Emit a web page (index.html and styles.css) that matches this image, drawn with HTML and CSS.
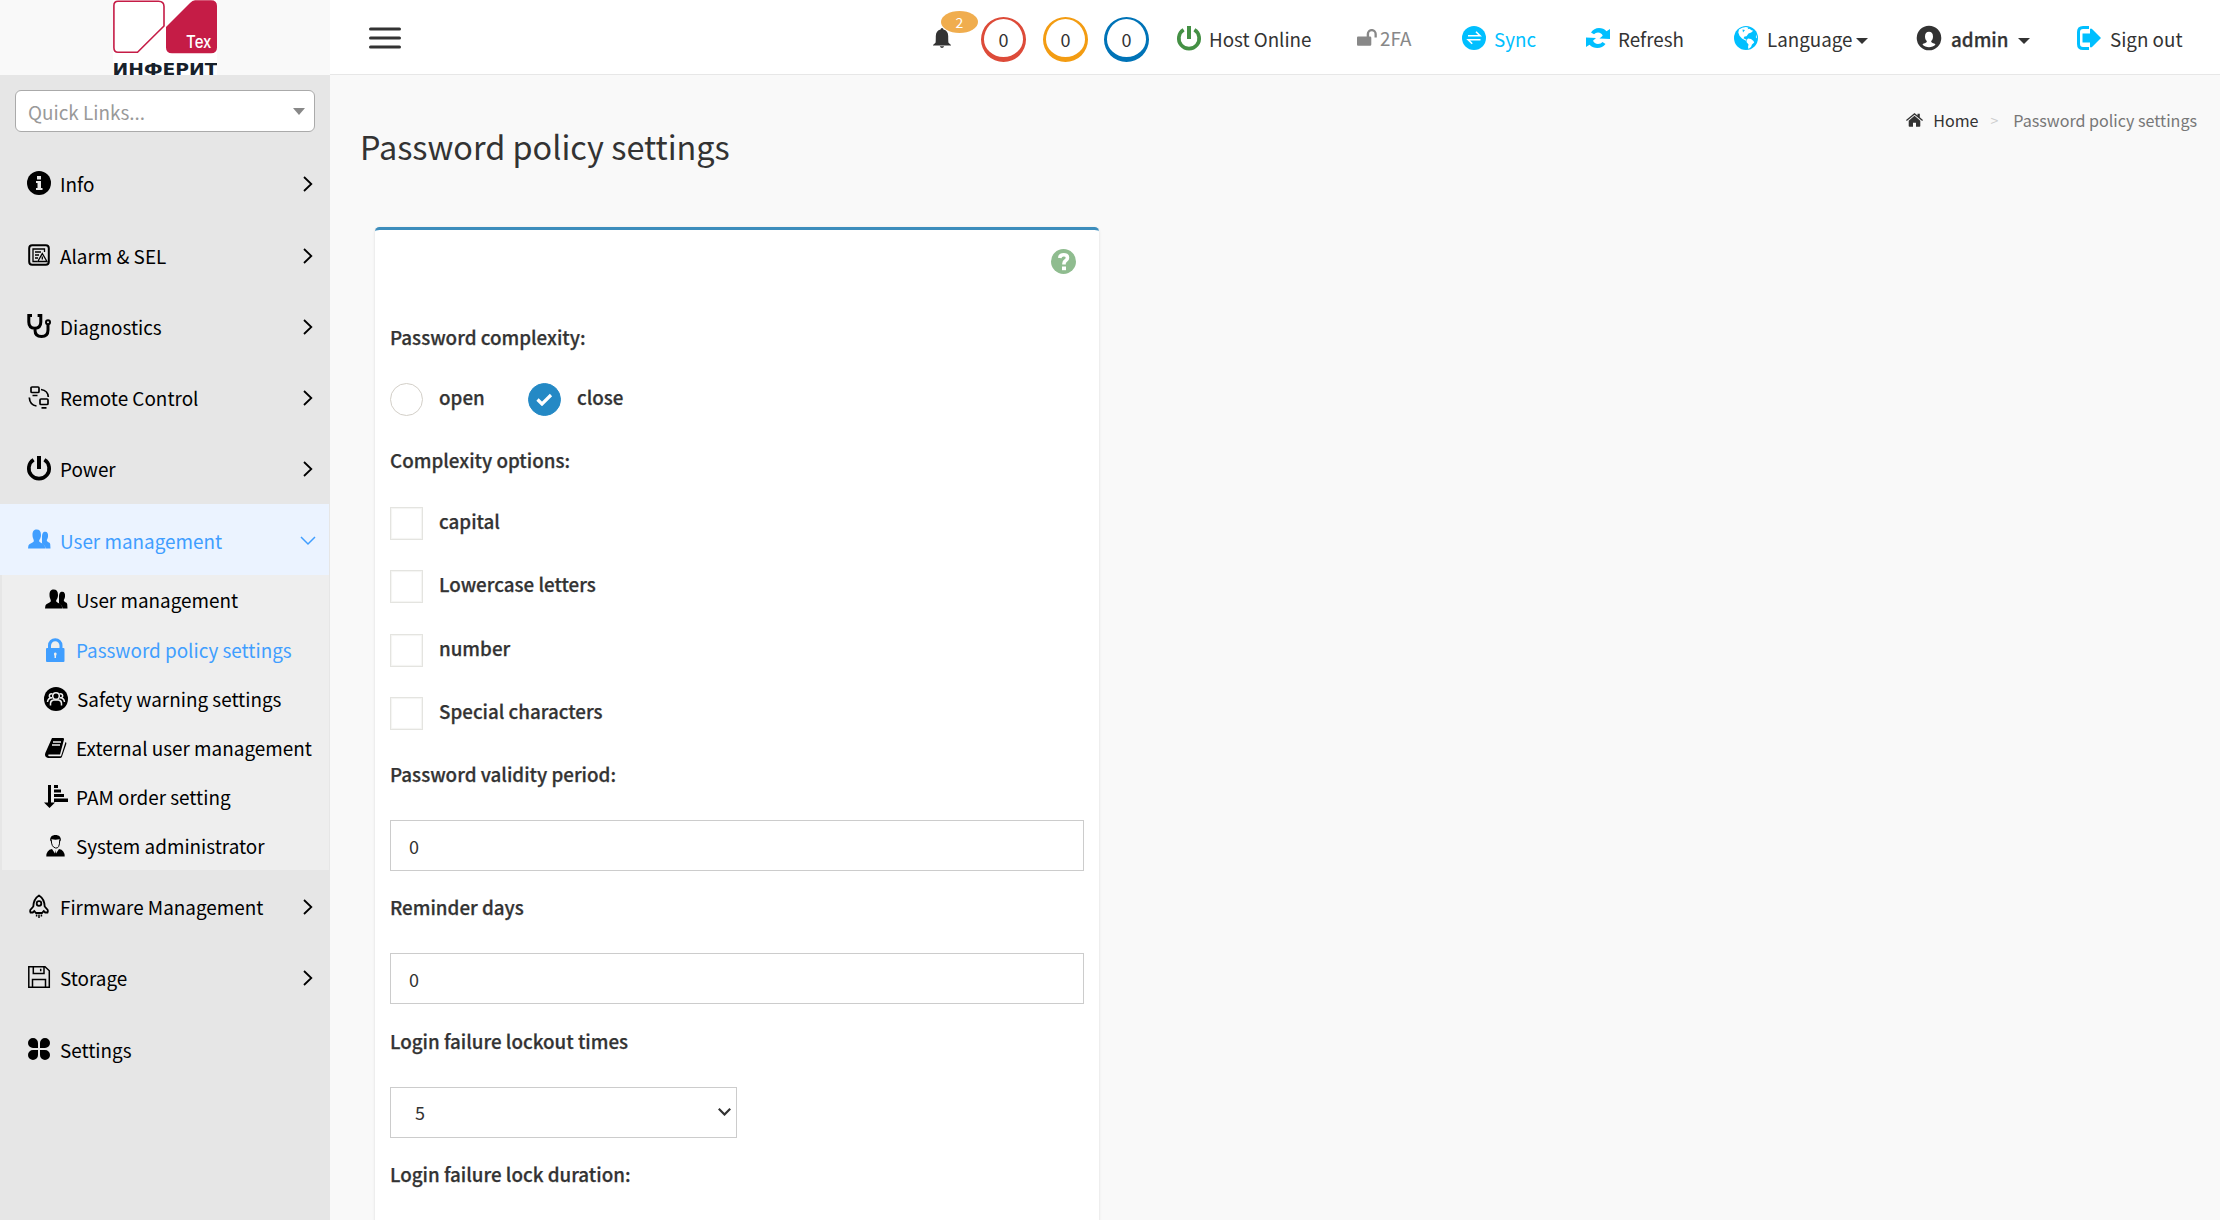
FILE: index.html
```html
<!DOCTYPE html>
<html lang="en">
<head>
<meta charset="utf-8">
<title>Password policy settings</title>
<link rel="stylesheet" href="styles.css">
</head>
<body>
<div class="app">
  <aside class="sidebar">
    <div class="brand">
      <svg class="logo" width="104" height="75" viewBox="0 0 104 75">
        <rect width="104" height="75" fill="#fff"/>
        <path d="M5 1.200H45.500Q51 1.200 51 6.500V26L24.500 52.300H5Q.900 52.300 .900 47.500V5.500Q.900 1.200 5 1.200Z" fill="#fff" stroke="#c51c46" stroke-width="1.600"/>
        <path d="M82 .300H98Q104 .300 104 6V47.500Q104 53.300 98 53.300H59Q53 53.300 53 47.500V27L77 3Q79.500 .300 82 .300Z" fill="#c51c46"/>
        <text class="logo-tag" x="73" y="47.500" textLength="25.500" lengthAdjust="spacingAndGlyphs">Тех</text>
        <text class="logo-name" x="-.500" y="75" textLength="105" lengthAdjust="spacingAndGlyphs">ИНФЕРИТ</text>
      </svg>
    </div>
    <div class="quick-links"><span>Quick Links...</span><svg width="12" height="7" viewBox="0 0 12 7"><path d="M0 0H12L6 7Z" fill="#888"/></svg></div>
    <nav class="menu">
      <a class="item">
        <svg class="icon" viewBox="0 0 24 24"><circle cx="12" cy="12" r="12"/><path d="M10 5h4v3.400h-4zM9 10h5v7h1.500v2h-6.500v-2h1.500v-5H9z" fill="#e6e6e6"/></svg>
        <span>Info</span><svg class="chev" viewBox="0 0 10 16"><path d="M1 1l7.300 7L1 15"/></svg>
      </a>
      <a class="item">
        <svg class="icon line" viewBox="0 0 24 24"><rect x="2.200" y="2.200" width="19.600" height="19.600" rx="3"/><g stroke-width="1.300"><path d="M17.500 9V6H6v12.500h4M8 9h6M8 12h4M8 15h3M15.300 10.500l4.700 8h-9.200zM15.300 13.500v3"/></g></svg>
        <span>Alarm &amp; SEL</span><svg class="chev" viewBox="0 0 10 16"><path d="M1 1l7.300 7L1 15"/></svg>
      </a>
      <a class="item">
        <svg class="icon line" viewBox="0 0 24 24"><path stroke-width="3" d="M5 1.500H1.800V8q0 6 6 6.300 6-.300 6-6.300V1.500h-3.200M8 14v2q0 6.500 6.500 6.500T21 16v-5.500"/><circle cx="21" cy="8.200" r="2" stroke-width="2"/></svg>
        <span>Diagnostics</span><svg class="chev" viewBox="0 0 10 16"><path d="M1 1l7.300 7L1 15"/></svg>
      </a>
      <a class="item">
        <svg class="icon line" viewBox="0 0 24 24"><g stroke-width="1.700"><rect x="4" y="2" width="8" height="5.500" rx="1"/><rect x="13" y="14" width="8" height="5.500" rx="1"/><path d="M5.500 10.500h5M14.500 22.800h5M14 4.500q7 1 7.300 7.500M2.300 12.500q.500 7.500 7.200 8.500"/></g></svg>
        <span>Remote Control</span><svg class="chev" viewBox="0 0 10 16"><path d="M1 1l7.300 7L1 15"/></svg>
      </a>
      <a class="item">
        <svg class="icon line" viewBox="0 0 24 24"><path stroke-width="3.700" d="M6.600 3.800a10.200 10.200 0 1 0 10.800 0"/><path stroke-width="4" d="M12 0v13"/></svg>
        <span>Power</span><svg class="chev" viewBox="0 0 10 16"><path d="M1 1l7.300 7L1 15"/></svg>
      </a>
      <a class="item active">
        <svg class="icon" viewBox="0 0 24 24"><path d="M15 9.500c0-4 1-5.700 3.200-5.700 2.300 0 3.200 2 2.800 5-.200 1.800-1.200 3-1.200 3.800.2 1.700 3 1.500 3.400 3.400l.3 4.500h-5q-.5-3.500-3.500-5z"/><path d="M5.500 7c0-4 1.500-5.500 4.200-5.500S14 3.300 14 7s-2 4.600-1.800 6.300 5 2 5.600 4.500l.4 2.700H1l.4-2.700c.6-2.500 5-2.800 5.400-4.500S5.500 10.500 5.500 7z"/></svg>
        <span>User management</span><svg class="chev down" viewBox="0 0 16 10"><path d="M1 1l7 7 7-7"/></svg>
      </a>
      <div class="submenu">
        <a class="sub"><svg class="icon" viewBox="0 0 24 24"><path d="M15 9.500c0-4 1-5.700 3.200-5.700 2.300 0 3.200 2 2.800 5-.200 1.800-1.200 3-1.200 3.800.2 1.700 3 1.500 3.400 3.400l.3 4.500h-5q-.5-3.500-3.500-5z"/><path d="M5.500 7c0-4 1.500-5.500 4.200-5.500S14 3.300 14 7s-2 4.600-1.800 6.300 5 2 5.600 4.500l.4 2.700H1l.4-2.700c.6-2.500 5-2.800 5.400-4.500S5.500 10.500 5.500 7z"/></svg><span>User management</span></a>
        <a class="sub current"><svg class="icon" viewBox="0 0 24 24"><path fill-rule="evenodd" d="M2 11q0-1 1-1h1V7.500a7 7 0 0 1 14.500 0V10h1q1 0 1 1v12q0 1-1 1H3q-1 0-1-1zm5-1h8.500V7.500a4.200 4.200 0 0 0-8.500 0zm3.500 8v2h1.500v-2q1.500-3.500-.700-3.500T10.500 18z"/></svg><span>Password policy settings</span></a>
        <a class="sub"><svg class="icon" viewBox="0 0 24 24"><circle cx="12" cy="12" r="12"/><g fill="none" stroke="#eee" stroke-width="1.500"><circle cx="12" cy="9" r="3.300"/><path d="M6.500 18.500v-2q0-3 3-3.500h5q3 .5 3 3.500v2M8.500 7.200a2 2 0 1 0-.5 3.500q-4 .2-4.500 4.300M15.500 7.200a2 2 0 1 1 .5 3.500q4 .2 4.500 4.300"/></g></svg><span class="nudge">Safety warning settings</span></a>
        <a class="sub"><svg class="icon" viewBox="0 0 24 24"><path d="M8 2h11q1.500 0 1 1.500L16 18.500H4.500q-1 1.200.5 1.700h12L21.500 6q1.300.5.800 2L18 20.500q-.5 1.500-2 1.500H4q-4-1-2.700-5z"/><path d="M9 6h8M8 9h8" stroke="#eee" stroke-width="1.300"/></svg><span>External user management</span></a>
        <a class="sub"><svg class="icon" viewBox="0 0 24 24"><path d="M4 0h3v17.500h4L5.500 23 0 17.500h4zM10 0h4v3h-4zM10 4.500h7v3h-7zM10 9h10v3H10zM10 13.500h14v3.500H10z"/></svg><span>PAM order setting</span></a>
        <a class="sub"><svg class="icon" viewBox="0 0 24 24"><path d="M6.300 7.500C5.500 3 8 1 11.500 1S17.500 3 16.800 7.500q-.6-1.500-1.600-2.200-3.700.7-7.400 0Q6.900 6 6.300 7.500zM2.300 22.500q0-6.500 5.700-7.500l3 4.500.5-3.500.5 3.500 3-4.500q5.700 1 5.700 7.500z"/><path d="M7.300 6q0 7 4.200 8t4.200-8" fill="none" stroke="currentColor"/></svg><span>System administrator</span></a>
      </div>
      <a class="item">
        <svg class="icon line" viewBox="0 0 24 24"><g stroke-width="1.800"><path d="M12 1.500Q17.500 5 17.700 12.500l3 3.500q.5 1.200-.2 2.500h-2.300l-1.500-1.500-1.700 2H9l-1.700-2-1.500 1.500H3.500q-.7-1.300-.2-2.500l3-3.500Q6.500 5 12 1.500z"/><circle cx="12" cy="9.500" r="2.300"/><path d="M9.600 20.500v2M12 20.500V24M14.400 20.500v2" stroke-width="1.500"/></g></svg>
        <span>Firmware Management</span><svg class="chev" viewBox="0 0 10 16"><path d="M1 1l7.300 7L1 15"/></svg>
      </a>
      <a class="item">
        <svg class="icon line" viewBox="0 0 24 24"><path stroke-width="1.500" d="M1.800 1.800H18l4.300 4V22.200H1.800zM6.300 2v6.500H17V2M13.700 3.800v2.500M5.500 22v-7.500h13V22"/></svg>
        <span>Storage</span><svg class="chev" viewBox="0 0 10 16"><path d="M1 1l7.300 7L1 15"/></svg>
      </a>
      <a class="item">
        <svg class="icon" viewBox="0 0 24 24"><path d="M6 1a5 5 0 0 1 5 5v5H6A5 5 0 0 1 6 1zM18 1a5 5 0 0 1 0 10h-5V6a5 5 0 0 1 5-5zM6 13h5v5a5 5 0 1 1-5-5zM13 13h5a5 5 0 1 1-5 5z"/></svg>
        <span>Settings</span>
      </a>
    </nav>
  </aside>

  <div class="page">
    <header class="topbar">
      <svg class="burger" width="34" height="22" viewBox="0 0 34 22"><path d="M2.500 2H31.500M2.500 11H31.500M2.500 20H31.500" stroke="#333" stroke-width="3" stroke-linecap="round"/></svg>
      <div class="tools">
        <div class="tool bell">
          <svg width="18" height="20" viewBox="0 0 18 20"><path d="M9 0q1.300 0 1.500 1.500 4.500 1 4.700 6.500 0 6 .3 6.800L18 17v.5H0V17l2.500-2.200q.3-.8.300-6.800Q3 2.500 7.500 1.500 7.700 0 9 0zM6.800 18.300h4.400Q10.500 20 9 20t-2.200-1.700z" fill="#333"/></svg>
          <span class="badge">2</span>
        </div>
        <div class="tool"><span class="ring red">0</span></div>
        <div class="tool"><span class="ring amber">0</span></div>
        <div class="tool"><span class="ring blue">0</span></div>
        <div class="tool"><svg class="icon line power" viewBox="0 0 24 24"><path stroke-width="3.700" d="M6.600 3.800a10.200 10.200 0 1 0 10.800 0"/><path stroke-width="4" d="M12 0v13"/></svg><span>Host Online</span></div>
        <div class="tool twofa"><svg width="20" height="17" viewBox="0 0 20 17"><path d="M1 7.500h8.700V5a5 5 0 0 1 10.100 0v3.500h-2.300V5a2.700 2.700 0 0 0-5.400 0v2.500h1q1.200 0 1.200 1.200V15.500q0 1.200-1.200 1.200H1q-1 0-1-1.200V8.700q0-1.200 1-1.200z" fill="#888"/></svg><span>2FA</span></div>
        <div class="tool sync"><svg class="icon" viewBox="0 0 24 24"><circle cx="12" cy="12" r="12"/><path d="M6 9.800h12l-4-4M18.500 13.800H6.200l4 4" fill="none" stroke="#fff" stroke-width="1.600"/></svg><span>Sync</span></div>
        <div class="tool"><svg class="icon cyan" viewBox="0 0 24 24"><path d="M24 3v10l-10.500-.5 3.200-2.700q-1.200-3-4.700-3.200-2.500 0-4 1.600L5 6.500Q8 2 13 2q4.500 0 7.500 3.200zM0 21V11.500l10 .5-3 2.700q1.300 3 5 3.200 3 0 4.500-2l3 2Q16.500 22 11.300 22q-4.500 0-7.800-3.200z"/></svg><span>Refresh</span></div>
        <div class="tool wide"><svg class="icon cyan" viewBox="0 0 24 24"><circle cx="12" cy="12" r="12"/><path d="M5 3.500Q8 1 12 .900l2.500.8-1 1.500 2-.5 2 1.500 1.700.5-2 1.800-2.700 1-2 2.700-2 .3-1 1.800 3 1.500-.5 1-4-2.300-2.500-2.700L4.300 6.500zM14 12.500l3 .5 2.500 2 .7 1.500-2.200 2-1 2.500-2.500 2-.5-2 .5-2.500-2-2.500.3-2zM22.300 8.500l.8 4-1.300-1.300z" fill="#fff"/><path d="M8.500 3.500l2.500.5-2 2.500z"/></svg><span>Language</span><svg class="caret tight" width="12" height="6" viewBox="0 0 12 6"><path d="M0 0H12L6 6Z"/></svg></div>
        <div class="tool strong"><svg class="icon" viewBox="0 0 24 24"><path fill-rule="evenodd" d="M12-.3a12.300 12.300 0 1 1 0 24.600 12.300 12.300 0 1 1 0-24.600zM12 5.800C9.400 5.800 8 7.700 8 10.500c0 2.200.7 3.700 1.800 4.600.3 2-2.600 2-4.300 3.300 1.500 1.700 4 2.800 6.500 2.800s5-1.100 6.500-2.800c-1.700-1.300-4.600-1.300-4.300-3.300 1.100-.9 1.800-2.400 1.800-4.600 0-2.800-1.400-4.700-4-4.700z"/></svg><span>admin</span><svg class="caret" width="12" height="6" viewBox="0 0 12 6"><path d="M0 0H12L6 6Z"/></svg></div>
        <div class="tool wide"><svg class="icon cyan" viewBox="0 0 24 24"><path d="M12 1.500H6Q1.500 1.500 1.500 6v12q0 4.500 4.500 4.500h6" fill="none" stroke="currentColor" stroke-width="3"/><path d="M5.500 7.500H13V3q1-1 2.300.3l8.700 8.700-8.700 8.700Q14 22 13 21v-4.500H5.500z"/></svg><span>Sign out</span></div>
      </div>
    </header>
    <main>
      <div class="page-head">
        <h1>Password policy settings</h1>
        <div class="crumbs">
          <svg width="17" height="14" viewBox="0 0 17 14"><path d="M8.500 2.700L14.300 7.700V13q0 .8-.8.800H10V9.800H7v4H3.500q-.8 0-.8-.8V7.700zM0 7L8.500 0l3 2.500V.700h2.300v3.600L17 7l-.8 1L8.500 1.700.8 8z"/></svg>
          <span>Home</span><span class="sep">&gt;</span><span class="here">Password policy settings</span>
        </div>
      </div>
      <section class="card">
        <svg class="help" width="25" height="25" viewBox="0 0 25 25"><circle cx="12.500" cy="12.500" r="12.500" fill="#8fbc8f"/><path d="M8.700 9q.3-3.200 4-3.200 3.800 0 3.800 3 0 1.700-1.700 2.800-1.800 1.200-1.800 3v.900" fill="none" stroke="#fff" stroke-width="3.600"/><path d="M11 17.500h4v3.700h-4z" fill="#fff"/></svg>
        <div class="group">
          <div class="label">Password complexity:</div>
          <div class="radios">
            <label class="choice"><span class="radio"></span>open</label>
            <label class="choice"><span class="radio on"><svg width="17" height="13" viewBox="0 0 17 13"><path d="M1.500 6.500l4.500 4.500 9-9" fill="none" stroke="#fff" stroke-width="3.200"/></svg></span>close</label>
          </div>
        </div>
        <div class="group">
          <div class="label">Complexity options:</div>
          <div class="checks">
            <label class="choice"><span class="check"></span>capital</label>
            <label class="choice"><span class="check"></span>Lowercase letters</label>
            <label class="choice"><span class="check"></span>number</label>
            <label class="choice"><span class="check"></span>Special characters</label>
          </div>
        </div>
        <div class="field"><div class="label">Password validity period:</div><div class="input">0</div></div>
        <div class="field"><div class="label">Reminder days</div><div class="input">0</div></div>
        <div class="field"><div class="label">Login failure lockout times</div><div class="input select"><span>5</span><svg width="13" height="8" viewBox="0 0 13 8"><path d="M.8.800l5.700 5.700L12.200.800" fill="none" stroke="#333" stroke-width="2.200"/></svg></div></div>
        <div class="field"><div class="label">Login failure lock duration:</div></div>
      </section>
    </main>
  </div>
</div>
</body>
</html>
```
FILE: styles.css
```css
* { box-sizing: border-box; }
body {
  margin: 0;
  font-family: "Noto Sans CJK SC", "Noto Sans", sans-serif;
  font-size: 18.8px;
  line-height: 30px;
  color: #333;
  background: #f9f9f9;
}
.app { display: flex; height: 1220px; overflow: hidden; }

.sidebar { flex: 0 0 330px; background: #e6e6e6; color: #000; font-size: 18.9px; }
.brand { height: 75px; background: #f9f9f9; padding-left: 113px; }
.logo { display: block; }
.logo-tag { font: 500 17px Inter, "Liberation Sans", sans-serif; fill: #fff; }
.logo-name { font: bold 15px "DejaVu Sans", sans-serif; fill: #17212b; }
.quick-links {
  display: flex; align-items: center; justify-content: space-between;
  height: 42px; margin: 15px 15px 15.75px; padding: 0 9px 0 12px;
  background: #fff; border: 1px solid #aaa; border-radius: 6px; color: #999;
}
.quick-links > span { padding-top: 1px; }
.icon { width: 24px; height: 24px; flex: none; fill: currentColor; display: block; overflow: visible; }
.line { fill: none; stroke: currentColor; stroke-width: 2; }
.item {
  display: flex; align-items: center; gap: 9px;
  height: 71.25px; padding: 0 16px 0 27px; margin-right: 1px;
}
.item > span { flex: 1; padding-top: 2px; white-space: nowrap; }
.chev { width: 10px; height: 16px; flex: none; margin-top: 2px; fill: none; stroke: currentColor; stroke-width: 1.8; overflow: visible; }
.chev.down { width: 16px; height: 10px; margin-right: -3px; stroke-width: 1.5; }
.item.active { background: #ebf3ff; color: #409eff; }
.submenu { margin: 0 1px 0 2px; background: #eee; }
.sub { display: flex; align-items: center; gap: 8px; height: 49.2px; padding: 1px 0 0 42px; white-space: nowrap; }
.nudge { margin-left: 1px; }
.sub.current { color: #409eff; }

.page { flex: 1; min-width: 0; }
.topbar {
  display: flex; justify-content: space-between; align-items: center;
  height: 75px; padding: 2px 0 0 38px; background: #fff; border-bottom: 1px solid #e7e7e7;
}
.burger { margin-top: -1px; }
.tools {
  display: grid; align-items: center;
  grid-template-columns: 48px 62px 61px 73px 180px 105px 124px 148px 183px 160px 143px;
}
.tool { display: flex; align-items: center; gap: 8px; white-space: nowrap; }
.tool.wide { gap: 9px; }
.tool > span { padding-top: 2px; }
.bell { position: relative; }
.tool .badge {
  position: absolute; left: 8px; top: -17px; width: 37px; height: 22px; padding: 0;
  border-radius: 50%; background: #f0ad4e; color: #fff; text-align: center;
  font-size: 14px; line-height: 22px;
}
.tool .ring {
  width: 45px; height: 45px; margin-top: 3px; padding: 0;
  border-style: solid; border-width: 2.5px 3px 5px 3px;
  border-radius: 50%; text-align: center; font-size: 18px; line-height: 41px;
}
.tool .red { border-color: #dd4b39; }
.tool .amber { border-color: #f39c12; }
.tool .blue { border-color: #0073b7; }
.power { color: #449044; }
.twofa { gap: 3px; color: #888; padding-bottom: 2px; }
.sync, .cyan { color: #00bfff; }
.caret { fill: #333; margin-top: 6px; }
.caret.tight { margin-left: -6px; }
.strong { gap: 10px; }

main { padding: 0 23px 0 30px; }
.page-head { display: flex; justify-content: space-between; height: 152px; }
h1 { margin: 46px 0 0; font-size: 32.4px; font-weight: 400; line-height: 50px; }
.crumbs { display: flex; align-items: center; height: 30px; margin-top: 30px; font-size: 16.1px; }
.crumbs > svg { fill: #333; margin-right: 10px; }
.sep { color: #ccc; margin: 0 15px 0 12px; font-size: 14px; }
.here { color: #777; }

.card {
  position: relative; width: 724px; height: 1010px; margin-left: 15px; padding: 92px 15px 0;
  background: #fff; border-top: 3px solid #3c8dbc; border-radius: 4.5px;
  box-shadow: 0 1px 3px rgba(0,0,0,.12);
}
.help { position: absolute; right: 23px; top: 19px; }
.label, .choice, .strong { font-weight: 500; -webkit-text-stroke: .25px currentColor; }
.group:nth-of-type(1) { height: 123px; }
.radios { display: flex; margin-top: 31px; }
.choice { display: flex; gap: 16px; line-height: 27px; }
.radios .choice { width: 138px; }
.radio { display: flex; align-items: center; justify-content: center; width: 33px; height: 33px; border: 1px solid #d3cfc8; border-radius: 50%; }
.radio.on { background: #2489c5; border-color: #2489c5; }
.group + .group { height: 314px; }
.checks { display: flex; flex-direction: column; gap: 30.33px; margin-top: 32px; }
.check { width: 33px; height: 33px; border: 1px solid #e4e4e0; box-shadow: inset 0 0 1px 1px #f4f4f2; }
.field { height: 133.4px; }
.input {
  display: flex; align-items: center; height: 51px; margin-top: 31px; padding: 0 18px;
  border: 1px solid #ccc; font-size: 18px;
}
.select { width: 347px; justify-content: space-between; padding: 0 5px 0 24px; }
```
